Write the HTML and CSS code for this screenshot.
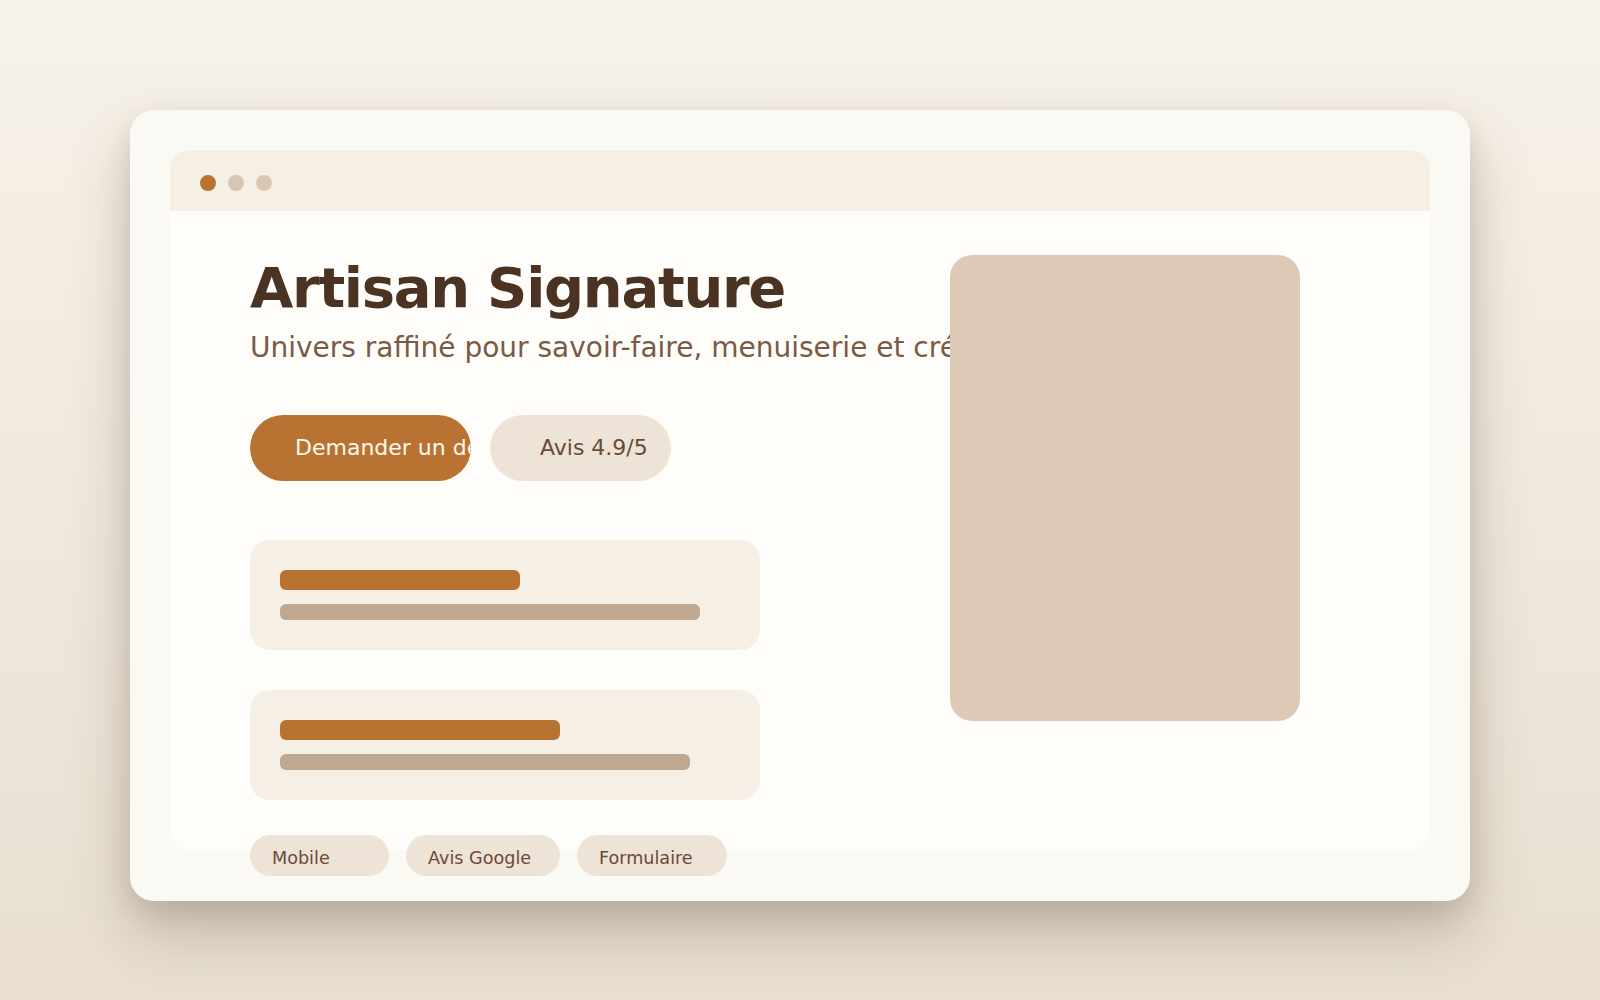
FILE: index.html
```html
<!DOCTYPE html>
<html lang="fr">
<head>
<meta charset="utf-8">
<title>Artisan Signature</title>
<link rel="stylesheet" href="styles.css">
</head>
<body>
  <div class="frame">
    <div class="window">
      <div class="titlebar">
        <span class="dot dot-active"></span>
        <span class="dot"></span>
        <span class="dot"></span>
      </div>
      <div class="content">
        <div class="main">
          <h1 class="title">Artisan Signature</h1>
          <p class="subtitle">Univers raffiné pour savoir-faire, menuiserie et créations sur mesure</p>
          <div class="actions">
            <a class="btn btn-primary">Demander un devis</a>
            <a class="btn btn-secondary">Avis 4.9/5</a>
          </div>
          <div class="cards">
            <div class="card">
              <div class="bar bar-accent bar-w240"></div>
              <div class="bar bar-muted bar-w420"></div>
            </div>
            <div class="card">
              <div class="bar bar-accent bar-w280"></div>
              <div class="bar bar-muted bar-w410"></div>
            </div>
          </div>
          <div class="chips">
            <span class="chip chip-mobile">Mobile</span>
            <span class="chip chip-google">Avis Google</span>
            <span class="chip chip-form">Formulaire</span>
          </div>
        </div>
        <div class="visual"></div>
      </div>
    </div>
  </div>
</body>
</html>
```

FILE: styles.css
```css
* { box-sizing: border-box; }

html, body { margin: 0; }

body {
  min-height: 100vh;
  padding-top: 110px;
  background: linear-gradient(180deg, #f7f2ea 0%, #e8dfd0 100%);
  font-family: "DejaVu Sans", "Liberation Sans", sans-serif;
  overflow: hidden;
}

.frame {
  width: 1340px;
  height: 791px;
  margin: 0 auto;
  padding: 40px;
  border-radius: 24px;
  background: #fbf9f4;
  box-shadow: 0 30px 60px rgba(74, 51, 34, 0.26), 0 10px 24px rgba(74, 51, 34, 0.1);
}

.window {
  height: 700px;
  border-radius: 20px;
  background: #fffdf9;
  display: flex;
  flex-direction: column;
}

.titlebar {
  height: 61px;
  flex: none;
  display: flex;
  align-items: center;
  gap: 12px;
  padding: 4px 30px 0;
  background: #f5efe6;
  border-radius: 20px 20px 0 0;
}

.dot {
  width: 16px;
  height: 16px;
  border-radius: 50%;
  background: #d8c5b2;
}

.dot-active { background: #b87333; }

.content {
  flex: 1;
  display: grid;
  grid-template-columns: 1fr 350px;
  align-items: start;
  padding: 44px 130px 0 80px;
}

.main {
  min-width: 0;
  display: flex;
  flex-direction: column;
  align-items: flex-start;
}

.title {
  margin: 2px 0 0;
  font-size: 56px;
  line-height: 1.1;
  font-weight: 700;
  letter-spacing: -0.023em;
  color: #4a3322;
  white-space: nowrap;
}

.subtitle {
  margin: 9px 0 0;
  font-size: 28px;
  line-height: 1.4;
  color: #7a5a45;
  white-space: nowrap;
}

.actions {
  margin-top: 48px;
  display: flex;
  gap: 19px;
}

.btn {
  height: 66px;
  display: flex;
  align-items: center;
  padding-bottom: 1px;
  border-radius: 999px;
  font-size: 22px;
  white-space: nowrap;
  overflow: hidden;
}

.btn-primary {
  width: 221px;
  padding-left: 45px;
  background: #b87333;
  color: #fff8ef;
}

.btn-secondary {
  width: 181px;
  padding-left: 50px;
  background: #ede3d6;
  color: #6b4a36;
}

.cards {
  margin-top: 59px;
  display: flex;
  flex-direction: column;
  gap: 40px;
}

.card {
  width: 510px;
  padding: 30px;
  border-radius: 20px;
  background: #f5efe6;
  display: flex;
  flex-direction: column;
  gap: 14px;
}

.bar { border-radius: 6px; }

.bar-accent { height: 20px; background: #b87333; }
.bar-muted { height: 16px; background: #c0a78f; }

.bar-w240 { width: 240px; }
.bar-w280 { width: 280px; }
.bar-w410 { width: 410px; }
.bar-w420 { width: 420px; }

.chips {
  margin-top: 35px;
  display: flex;
  gap: 17px;
}

.chip {
  height: 41px;
  display: flex;
  align-items: center;
  padding: 6px 0 0 22px;
  border-radius: 999px;
  background: #ede3d6;
  color: #6b4a36;
  font-size: 17.6px;
  white-space: nowrap;
}

.chip-mobile { width: 139px; }
.chip-google { width: 154px; }
.chip-form { width: 150px; }

.visual {
  position: relative;
  height: 466px;
  border-radius: 22px;
  background: #ddcab6;
}
```
